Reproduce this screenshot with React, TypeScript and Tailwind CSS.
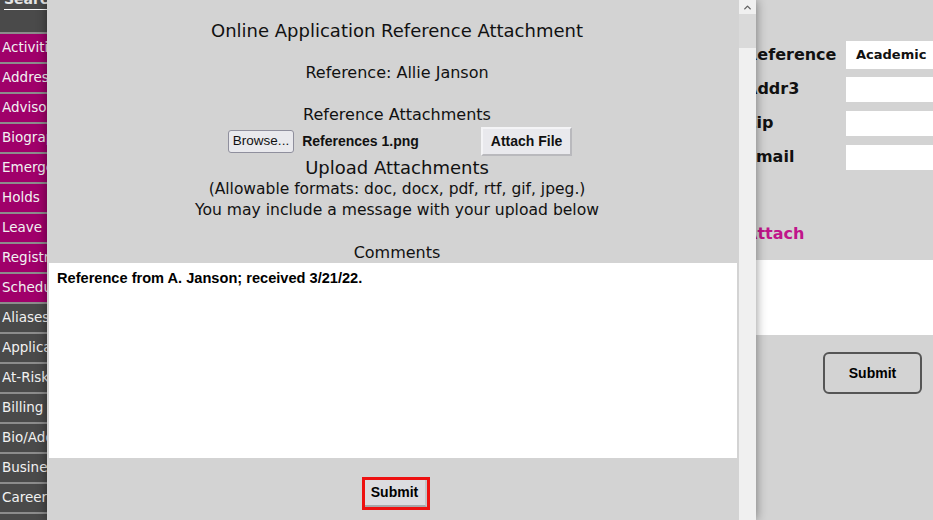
import { ChevronUp } from "lucide-react";

const gothic = "font-['DejaVu_Sans',sans-serif]";
const arial = "font-['Liberation_Sans',Arial,sans-serif]";

type NavItem = { label: string; active: boolean };

const navItems: NavItem[] = [
  { label: "Activities", active: true },
  { label: "Address", active: true },
  { label: "Advisor", active: true },
  { label: "Biography", active: true },
  { label: "Emergency", active: true },
  { label: "Holds", active: true },
  { label: "Leave", active: true },
  { label: "Registration", active: true },
  { label: "Schedule", active: true },
  { label: "Aliases", active: false },
  { label: "Application", active: false },
  { label: "At-Risk", active: false },
  { label: "Billing History", active: false },
  { label: "Bio/Address", active: false },
  { label: "Business", active: false },
  { label: "Career", active: false },
  { label: "Contacts", active: false },
];

const formRows = [
  { label: "Reference", value: "Academic" },
  { label: "Addr3", value: "" },
  { label: "Zip", value: "" },
  { label: "Email", value: "" },
];

function Sidebar() {
  return (
    <aside className={`w-[47px] shrink-0 overflow-hidden bg-[#4a4a4a] ${gothic}`}>
      <div className="flex h-[32px] flex-col overflow-hidden">
        <div className="ml-[4px] -mt-[9px] border-b border-white pb-[2px] text-[14px] font-bold leading-[16px] text-[#e5e5e5] whitespace-nowrap">
          Search
        </div>
      </div>
      {navItems.map((item) => (
        <div
          key={item.label}
          className={`h-[30px] border-t-2 border-[#8c8c8c] pl-[2px] text-[13.5px] leading-[27px] whitespace-nowrap text-[#f2f2f2] ${
            item.active ? "bg-[#a0006a]" : "bg-[#4a4a4a]"
          }`}
        >
          {item.label}
        </div>
      ))}
    </aside>
  );
}

function PageBehind() {
  return (
    <main className={`flex-1 overflow-hidden ${gothic}`}>
      <div className="ml-auto mt-[38px] w-[195px]">
        {formRows.map((row, i) => (
          <div key={row.label} className="flex h-[34px] items-center">
            <div className="w-[108px] shrink-0 overflow-hidden text-[16px] font-bold text-[#111] whitespace-nowrap">
              <span className="ml-[7px] block">{row.label}</span>
            </div>
            <div
              className={`flex flex-1 items-center bg-white pl-[10px] text-[13px] font-bold text-[#111] ${
                i === 0 ? "h-[28px]" : "h-[25px]"
              }`}
            >
              {row.value}
            </div>
          </div>
        ))}
        <div className="mt-[50px] ml-[7px] text-[16px] font-bold leading-[20px] text-[#c0158a]">
          Attach
        </div>
      </div>
      <div className="mt-[16px] h-[75px] bg-white" />
      <div className="mt-[17px] flex justify-end pr-[11px]">
        <button
          className={`h-[42px] w-[99px] rounded-[6px] border-2 border-[#555] bg-[#d3d3d3] text-[14px] font-bold text-black ${arial}`}
        >
          Submit
        </button>
      </div>
    </main>
  );
}

function Modal() {
  return (
    <div className="absolute left-[47px] top-0 flex h-[520px] w-[709px] shadow-[0_0_10px_rgba(0,0,0,0.45)]">
      <div className={`flex flex-1 flex-col bg-[#d3d3d3] px-[2px] text-[#111] ${gothic}`}>
        <div className="flex flex-col items-center pl-[8px] text-center">
          <h1 className="mt-[19px] text-[18px] leading-[24px]">
            Online Application Reference Attachment
          </h1>
          <p className="mt-[18px] text-[16px] leading-[24px]">Reference: Allie Janson</p>
          <p className="mt-[18px] text-[16px] leading-[24px]">Reference Attachments</p>
          <div className={`ml-[6px] flex h-[29px] items-center ${arial}`}>
            <button className="h-[23px] rounded-[3px] border border-[#8f8f9d] bg-[#e9e9ed] px-[4px] text-[13.5px] text-[#111]">
              Browse...
            </button>
            <span className="ml-[8px] w-[179px] text-left text-[14px] font-bold">
              References 1.png
            </span>
            <button className="h-[29px] w-[91px] border-2 border-t-[#f4f4f6] border-l-[#f4f4f6] border-b-[#b9b9bd] border-r-[#b9b9bd] bg-[#e9e9ed] text-[14px] font-bold text-[#111]">
              Attach File
            </button>
          </div>
          <p className="mt-[1px] text-[18px] leading-[22px]">Upload Attachments</p>
          <p className="text-[15.5px] leading-[21px]">
            (Allowable formats: doc, docx, pdf, rtf, gif, jpeg.)
          </p>
          <p className="text-[15.6px] leading-[21px]">
            You may include a message with your upload below
          </p>
          <p className="mt-[21px] text-[16px] leading-[21px]">Comments</p>
        </div>
        <div className={`h-[195px] bg-white px-[8px] pt-[5px] text-[14.6px] font-bold text-black ${arial}`}>
          Reference from A. Janson; received 3/21/22.
        </div>
        <div className="mt-[19px] flex justify-center pl-[5px]">
          <div className="border-[3px] border-[#ee1111]">
            <button
              className={`h-[27px] w-[62px] border-b-2 border-r-2 border-b-[#a8a8ac] border-r-[#c4c4c8] bg-[#dcdce0] text-[14px] font-bold text-black ${arial}`}
            >
              Submit
            </button>
          </div>
        </div>
      </div>
      <div className="flex w-[17px] shrink-0 flex-col bg-[#f0f0f0]">
        <div className="flex h-[14px] items-center justify-center">
          <ChevronUp className="h-[11px] w-[11px] text-[#606060]" strokeWidth={3} />
        </div>
        <div className="h-[34px] bg-[#dadada]" />
      </div>
    </div>
  );
}

export default function App() {
  return (
    <div className="relative flex h-[520px] w-[933px] overflow-hidden bg-[#d3d3d3]">
      <Sidebar />
      <PageBehind />
      <Modal />
    </div>
  );
}
